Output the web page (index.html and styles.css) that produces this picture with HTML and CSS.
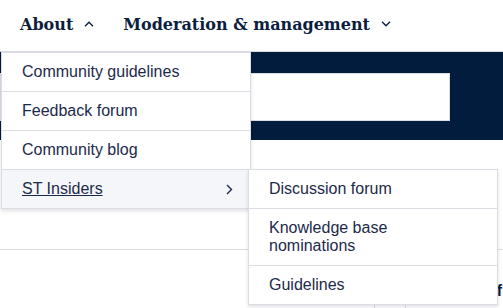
FILE: index.html
```html
<!DOCTYPE html>
<html lang="en">
<head>
  <meta charset="UTF-8" />
  <meta name="viewport" content="width=device-width, initial-scale=1.0"/>
  <title>Community</title>
  <link rel="stylesheet" href="styles.css">
</head>
<body>

  <!-- Top navigation -->
  <header class="topnav">
    <a class="nav-link open" href="#">About
      <svg class="nav-chevron" width="10" height="6" viewBox="0 0 10 6"><path d="M1 5.2L5 1.2L9 5.2" fill="none" stroke="currentColor" stroke-width="1.4"/></svg>
    </a>
    <a class="nav-link" href="#">Moderation &amp; management
      <svg class="nav-chevron" width="10" height="6" viewBox="0 0 10 6"><path d="M1 0.8L5 4.8L9 0.8" fill="none" stroke="currentColor" stroke-width="1.4"/></svg>
    </a>
  </header>

  <!-- Hero with search -->
  <section class="hero">
    <div class="search-box"></div>
  </section>

  <!-- Page content behind the menu -->
  <main class="content">
    <div class="content-row"></div>
    <div class="teaser"><span class="teaser-title">f</span></div>
    <div class="cells">
      <span class="cell"></span>
      <span class="cell"></span>
    </div>
  </main>

  <!-- About dropdown -->
  <ul class="dropdown">
    <li><a href="#">Community guidelines</a></li>
    <li><a href="#">Feedback forum</a></li>
    <li><a href="#">Community blog</a></li>
    <li class="has-sub active">
      <a href="#">ST Insiders</a>
      <svg class="sub-chevron" width="7" height="11" viewBox="0 0 7 11"><path d="M1 1L5.5 5.5L1 10" fill="none" stroke="currentColor" stroke-width="1.4"/></svg>
    </li>
  </ul>

  <!-- ST Insiders submenu -->
  <ul class="dropdown submenu">
    <li><a href="#">Discussion forum</a></li>
    <li><a href="#">Knowledge base nominations</a></li>
    <li><a href="#">Guidelines</a></li>
  </ul>

</body>
</html>
```

FILE: styles.css
```css
* {
  margin: 0;
  padding: 0;
  box-sizing: border-box;
}

body {
  font-family: "Liberation Sans", Arial, sans-serif;
  background: #fff;
  color: #1c2a4a;
  overflow: hidden;
  height: 308px;
}

a {
  color: inherit;
  text-decoration: none;
}

.topnav {
  height: 52px;
  display: flex;
  align-items: center;
  gap: 29px;
  padding: 0 0 2px 20px;
  border-bottom: 1px solid #dcdde4;
}

.nav-link {
  display: flex;
  align-items: center;
  gap: 11px;
  font-family: "DejaVu Serif", serif;
  font-weight: bold;
  font-size: 16px;
  color: #0b1e3e;
}

.nav-chevron {
  margin-top: -2px;
}

.hero {
  height: 88px;
  background: #011c3c;
  padding-top: 21px;
}

.search-box {
  width: 450px;
  height: 48px;
  background: #fff;
  border: 1px solid #dcdde4;
}

.content {
  position: relative;
}

.content-row {
  height: 110px;
  border-bottom: 1px solid #dcdde4;
}

.teaser {
  display: flex;
  justify-content: flex-end;
  padding-top: 32px;
  height: 54px;
}

.teaser-title {
  font-weight: bold;
  font-size: 16px;
  color: #0b1e3e;
  margin-right: 1px;
}

.cells {
  display: flex;
  padding-left: 374px;
}

.cell {
  width: 31px;
  height: 10px;
  border-left: 1px solid #dcdde4;
}

.dropdown {
  position: absolute;
  left: 1px;
  top: 52px;
  width: 250px;
  list-style: none;
  background: #fff;
  border: 1px solid #dcdde4;
  box-shadow: 0 2px 4px rgba(0, 0, 0, 0.12);
}

.dropdown li {
  display: flex;
  align-items: center;
  justify-content: space-between;
  padding: 9px 40px 9px 20px;
  font-size: 16px;
  line-height: 20px;
  border-bottom: 1px solid #dcdde4;
}

.dropdown li:last-child {
  border-bottom: none;
}

.dropdown li.active {
  background: #f5f6f9;
}

.dropdown li.active a {
  text-decoration: underline;
}

.has-sub {
  padding-right: 17px !important;
}

.sub-chevron {
  color: #1c2a4a;
}

.submenu {
  left: 248px;
  top: 169px;
}

.submenu li {
  line-height: 18px;
  padding-top: 10px;
  padding-bottom: 10px;
}
```
